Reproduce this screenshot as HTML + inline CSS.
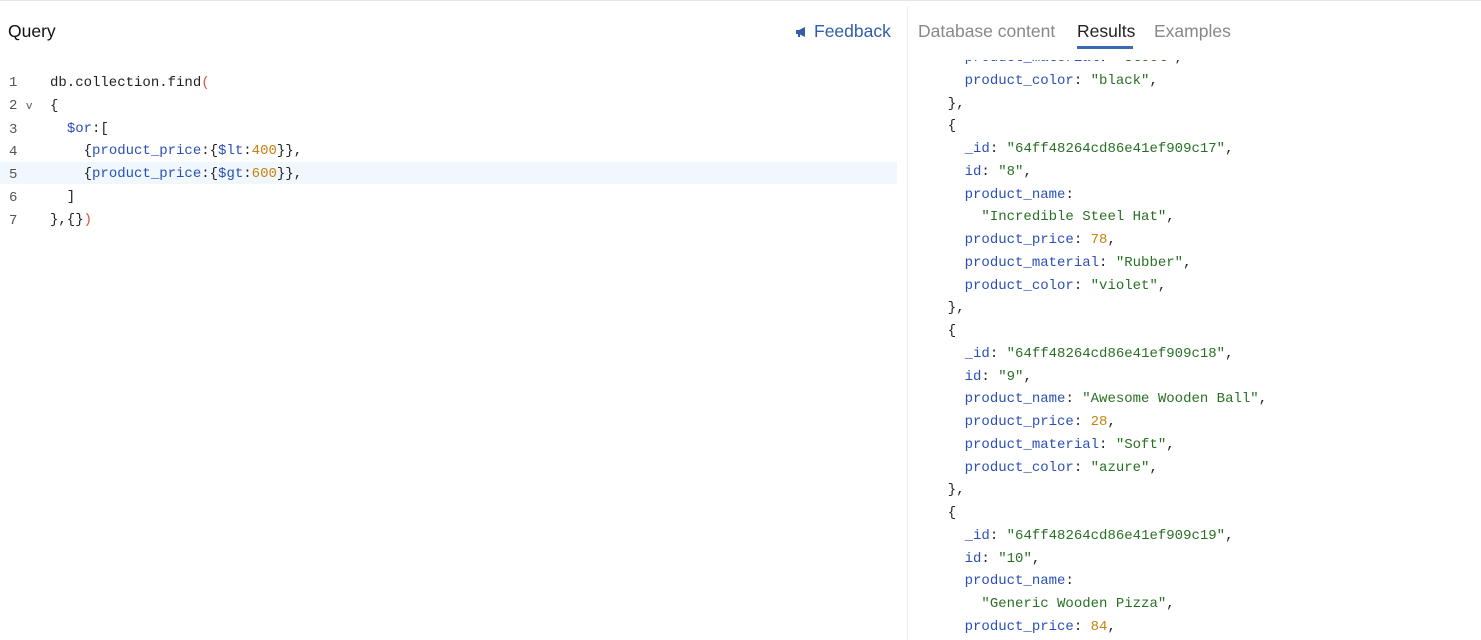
<!DOCTYPE html>
<html><head><style>
body{margin:0;width:1481px;height:640px;overflow:hidden;background:#fff;font-family:"Liberation Sans",sans-serif;position:relative}
.top{position:absolute;left:0;top:0;width:1481px;height:1px;background:#e3e6ea}
.div{position:absolute;left:907px;top:6px;width:1px;height:634px;background:#eceef0}
.h{position:absolute;top:21px;font-size:17.5px}
.code{position:absolute;font-family:"Liberation Mono",monospace;font-size:14px;white-space:pre;line-height:22.75px}
.ln{color:#555}
.k{color:#2a4fb8}.s{color:#287024}.n{color:#c8800f}.p{color:#e0503c}.b{color:#222}
.hl{position:absolute;left:0;top:162px;width:897px;height:22px;background:#f0f8fe}
.ul{position:absolute;left:1077px;top:46px;width:56px;height:3px;background:#3a6ab4}
.clip{position:absolute;left:908px;top:60px;width:573px;height:580px;overflow:hidden}
</style></head><body>
<div class="top"></div>
<div class="div"></div>
<div class="h" style="left:8px;color:#111">Query</div>
<div class="h" style="left:795px;color:#2f5fa8">
<svg width="13" height="12" viewBox="0 0 13 12" style="vertical-align:-1px;margin-right:6px"><path d="M1 4h3l6-3v10L4 8H1z" fill="#2f5fa8"/><rect x="3" y="8" width="2" height="3" fill="#2f5fa8"/></svg>Feedback</div>
<div class="h" style="left:918px;color:#888">Database content</div>
<div class="h" style="left:1077px;color:#222">Results</div>
<div class="h" style="left:1154px;color:#888">Examples</div>
<div class="ul"></div>
<div class="hl"></div>
<div class="code ln" style="left:9px;top:72px">1
2 <span style="font-size:11px">v</span>
3
4
5
6
7</div>
<div class="code b" style="left:50px;top:72px">db.collection.find<span class="p">(</span>
{
  <span class="k">$or</span>:[
    {<span class="k">product_price</span>:{<span class="k">$lt</span>:<span class="n">400</span>}},
    {<span class="k">product_price</span>:{<span class="k">$gt</span>:<span class="n">600</span>}},
  ]
},{}<span class="p">)</span></div>
<div class="clip"><div class="code b" style="left:23px;top:-13px">    <span class="k">product_material</span>: <span class="s">"Steel"</span>,
    <span class="k">product_color</span>: <span class="s">"black"</span>,
  },
  {
    <span class="k">_id</span>: <span class="s">"64ff48264cd86e41ef909c17"</span>,
    <span class="k">id</span>: <span class="s">"8"</span>,
    <span class="k">product_name</span>:
      <span class="s">"Incredible Steel Hat"</span>,
    <span class="k">product_price</span>: <span class="n">78</span>,
    <span class="k">product_material</span>: <span class="s">"Rubber"</span>,
    <span class="k">product_color</span>: <span class="s">"violet"</span>,
  },
  {
    <span class="k">_id</span>: <span class="s">"64ff48264cd86e41ef909c18"</span>,
    <span class="k">id</span>: <span class="s">"9"</span>,
    <span class="k">product_name</span>: <span class="s">"Awesome Wooden Ball"</span>,
    <span class="k">product_price</span>: <span class="n">28</span>,
    <span class="k">product_material</span>: <span class="s">"Soft"</span>,
    <span class="k">product_color</span>: <span class="s">"azure"</span>,
  },
  {
    <span class="k">_id</span>: <span class="s">"64ff48264cd86e41ef909c19"</span>,
    <span class="k">id</span>: <span class="s">"10"</span>,
    <span class="k">product_name</span>:
      <span class="s">"Generic Wooden Pizza"</span>,
    <span class="k">product_price</span>: <span class="n">84</span>,</div></div>
</body></html>
